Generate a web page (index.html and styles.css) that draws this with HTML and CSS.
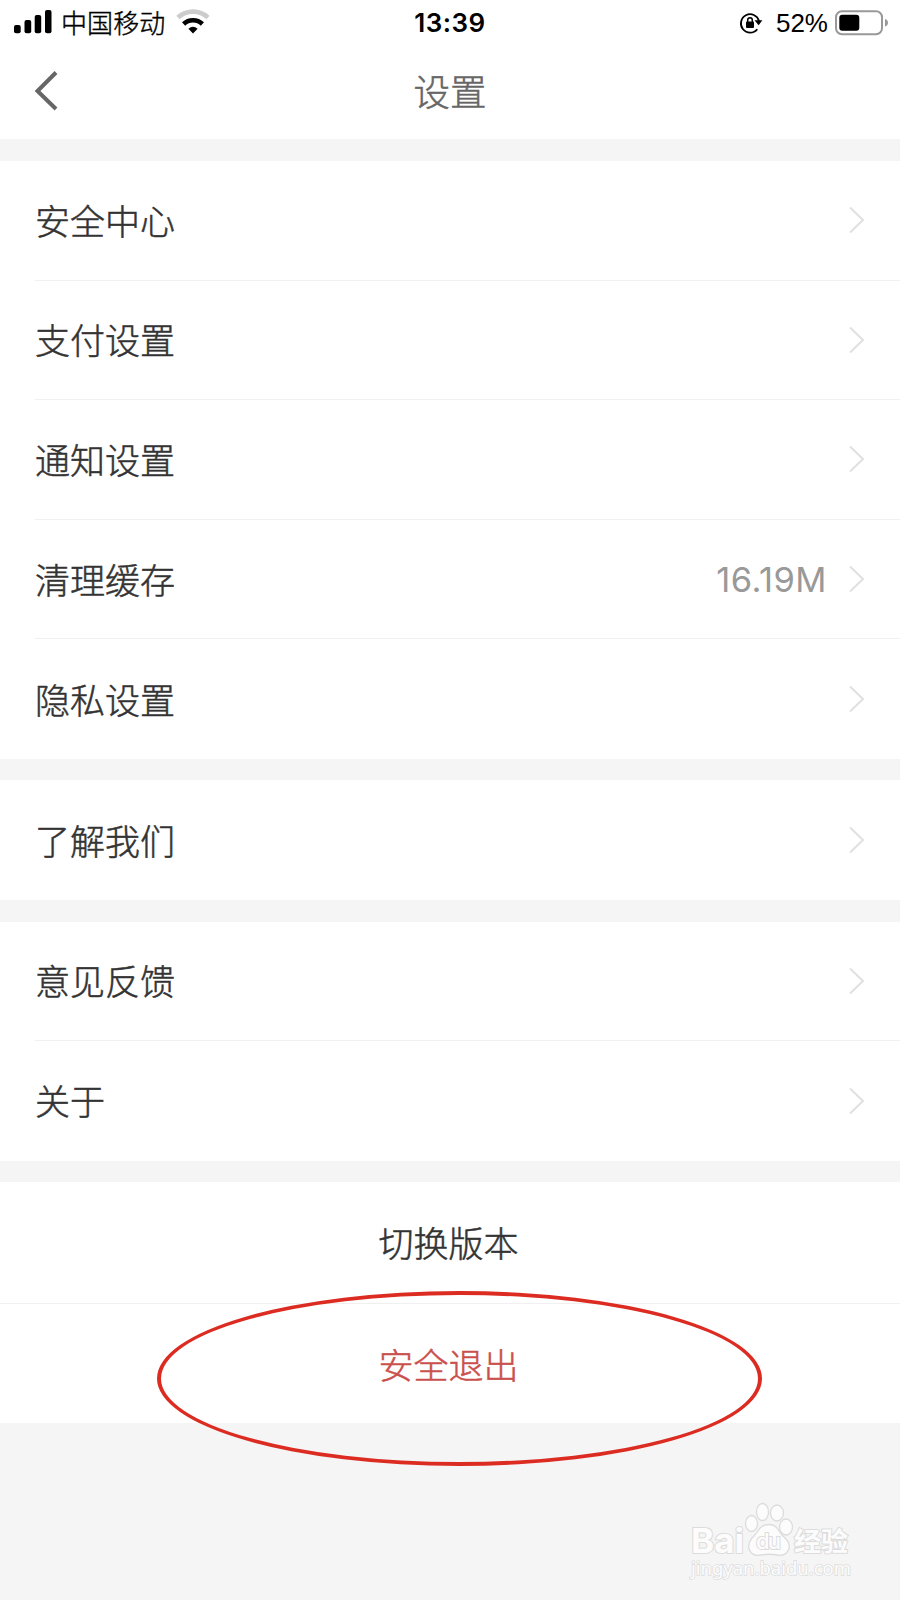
FILE: index.html
```
<!DOCTYPE html>
<html lang="zh-CN">
<head>
  <meta charset="UTF-8">
  <title>设置</title>
  <link rel="stylesheet" href="styles.css">
</head>
<body>
  <svg class="defs" width="0" height="0">
    <symbol id="arrow" viewBox="0 0 16 28"><path d="M1 1.5 L14 14 L1 26.5" fill="none" stroke="#e0e0e0" stroke-width="2"/></symbol>
  </svg>
  <div class="page">
    <div class="status">
      <div class="status-left">
        <svg width="38" height="24" viewBox="0 0 38 24">
          <rect x="0" y="15" width="6.7" height="8.2" rx="2"/>
          <rect x="10.5" y="10" width="6.7" height="13.2" rx="2"/>
          <rect x="20.7" y="5" width="6.5" height="18.2" rx="2"/>
          <rect x="31" y="0" width="6.5" height="23.2" rx="2"/>
        </svg>
        <span class="carrier">中国移动</span>
        <svg class="wifi" width="34" height="26" viewBox="0 0 34 26">
          <path d="M2 8.5 A22 22 0 0 1 32 8.5" fill="none" stroke="#ccc" stroke-width="4.6"/>
          <path d="M7.6 15 A13.6 13.6 0 0 1 26.4 15" fill="none" stroke="#000" stroke-width="4.6"/>
          <path d="M12.4 19.8 Q17 15.9 21.6 19.8 L17 24.4 Z"/>
        </svg>
      </div>
      <div class="time">13:39</div>
      <div class="status-right">
        <svg width="24" height="22" viewBox="0 0 24 22">
          <path d="M18.3 17.2 A9.2 9.2 0 1 1 20 9" fill="none" stroke="#000" stroke-width="1.800"/>
          <path d="M15.500 8.200 H23.400 L19.600 13.200 Z"/>
          <rect x="7" y="9.4" width="8" height="6.6" rx="1"/>
          <path d="M8.7 10 V8 A2.3 2.3 0 0 1 13.3 8 V10" fill="none" stroke="#000" stroke-width="1.5"/>
        </svg>
        <span class="percent">52%</span>
        <svg width="54" height="26" viewBox="0 0 54 26">
          <rect x="1" y="1.2" width="46" height="23" rx="6" fill="none" stroke="#999" stroke-width="2"/>
          <rect x="4.3" y="4.7" width="20" height="16" rx="3"/>
          <path d="M50 9 Q53 10 53 12.8 Q53 15.6 50 16.6 Z" fill="#999"/>
        </svg>
      </div>
    </div>

    <div class="navbar">
      <svg class="back" width="24" height="40" viewBox="0 0 24 40"><path d="M22 1.5 L3.5 20 L22 38" fill="none" stroke="#666" stroke-width="4"/></svg>
      <h1>设置</h1>
    </div>

    <div class="group">
      <div class="row"><span>安全中心</span><svg class="arrow"><use href="#arrow"/></svg></div>
      <div class="row"><span>支付设置</span><svg class="arrow"><use href="#arrow"/></svg></div>
      <div class="row"><span>通知设置</span><svg class="arrow"><use href="#arrow"/></svg></div>
      <div class="row"><span>清理缓存</span><span class="value">16.19M</span><svg class="arrow"><use href="#arrow"/></svg></div>
      <div class="row"><span>隐私设置</span><svg class="arrow"><use href="#arrow"/></svg></div>
    </div>
    <div class="group">
      <div class="row"><span>了解我们</span><svg class="arrow"><use href="#arrow"/></svg></div>
    </div>
    <div class="group">
      <div class="row"><span>意见反馈</span><svg class="arrow"><use href="#arrow"/></svg></div>
      <div class="row"><span>关于</span><svg class="arrow"><use href="#arrow"/></svg></div>
    </div>
    <div class="actions">
      <div class="action">切换版本</div>
      <div class="action logout">安全退出</div>
    </div>

    <div class="circle"></div>

    <svg class="watermark" width="180" height="90" viewBox="0 0 180 90">
      <g fill="#fcfcfc" stroke="#dcdcdc" stroke-width="2">
        <text class="wm-bai" x="11" y="53" textLength="53" lengthAdjust="spacingAndGlyphs">Bai</text>
        <text class="wm-cn" x="114" y="51" textLength="54" lengthAdjust="spacingAndGlyphs">经验</text>
        <g stroke-width="1.3">
          <ellipse cx="71.5" cy="23.5" rx="6" ry="8"/>
          <ellipse cx="82.5" cy="12" rx="6" ry="8.5"/>
          <ellipse cx="97" cy="13" rx="6.5" ry="8"/>
          <ellipse cx="106" cy="27" rx="6.5" ry="8"/>
          <path d="M89 24.5 C98 24.5 98 32 105 38 C114 47 107 57 97 55 Q89 53.5 81 55 C70 57 65 47 72 38 C79 32 79 24.5 89 24.5 Z"/>
        </g>
        <text class="wm-du" x="76" y="49" textLength="25">du</text>
        <text class="wm-url" x="11" y="75" textLength="160" lengthAdjust="spacingAndGlyphs">jingyan.baidu.com</text>
      </g>
    </svg>
  </div>
</body>
</html>
```
FILE: styles.css
```
* { box-sizing: border-box; }
body { margin: 0; background: #f5f5f5; color: #333; font-family: Inter, "Noto Sans CJK SC", sans-serif; }
.defs { position: absolute; }
.page { position: relative; width: 900px; height: 1600px; overflow: hidden; }

.status { display: grid; grid-template-columns: 1fr auto 1fr; align-items: center; height: 46px; padding: 0 11px 0 14px; background: #fff; color: #000; font-size: 26px; line-height: 46px; }
.status svg { display: block; }
.status-left, .status-right { display: flex; align-items: center; height: 46px; }
.status-left > svg:first-child { margin-top: -3px; }
.carrier { margin-left: 9px; padding-top: 2px; letter-spacing: 0.1px; font-weight: 300; -webkit-text-stroke: 0.4px; }
.wifi { margin: -3px 0 0 11px; }
.time { margin-right: 3px; font-weight: 600; letter-spacing: 0.5px; }
.status-right { justify-content: flex-end; }
.percent { margin: 0 7px 0 13px; font: 26px/46px "Liberation Sans", sans-serif; }

.navbar { display: flex; align-items: center; justify-content: center; position: relative; height: 93px; background: #fff; }
.navbar h1 { margin: 0; color: #666; font-size: 36.5px; font-weight: 300; line-height: 50px; -webkit-text-stroke: 0.5px; }
.back { position: absolute; left: 34px; top: 25px; }

.group, .actions { margin-top: 21.5px; background: #fff; }
.navbar + .group { margin-top: 22px; }
.row { display: flex; align-items: center; height: 119.6px; margin-left: 35px; padding-right: 35px; border-bottom: 1px solid #f0f0f0; font-size: 35px; font-weight: 300; line-height: 50px; }
.row:last-child { border-bottom: 0; }
.row span:first-child { padding-top: 3px; -webkit-text-stroke: 0.5px; }
.row .value { margin: 2px 0 0 auto; color: #999; font-size: 34.5px; font-weight: 400; letter-spacing: 0.5px; }
.arrow { width: 16px; height: 28px; margin-left: auto; }
.value + .arrow { margin-left: 22px; }

.action { display: flex; align-items: center; justify-content: center; height: 120.5px; padding: 2px 3px 0 0; font-size: 35px; font-weight: 300; line-height: 50px; -webkit-text-stroke: 0.5px; }
.action + .action { border-top: 1px solid #f0f0f0; }
.logout { padding-top: 4px; color: #c9504c; }

/* hand-drawn mark round the logout button */
.circle { position: absolute; left: 157px; top: 1291px; width: 605px; height: 175px; border: 4px solid #dc2c22; border-radius: 50%; }

.watermark { position: absolute; left: 680px; top: 1500px; }
.watermark text { paint-order: stroke; }
.wm-bai { font: 700 34px/1 Inter, sans-serif; }
.wm-cn { font: 700 26px/1 "Noto Sans CJK SC", sans-serif; }
.wm-du { font: 500 22px/1 Inter, sans-serif; }
.wm-url { font: 18px/1 "Noto Sans", sans-serif; stroke-width: 1.5px; }
```
